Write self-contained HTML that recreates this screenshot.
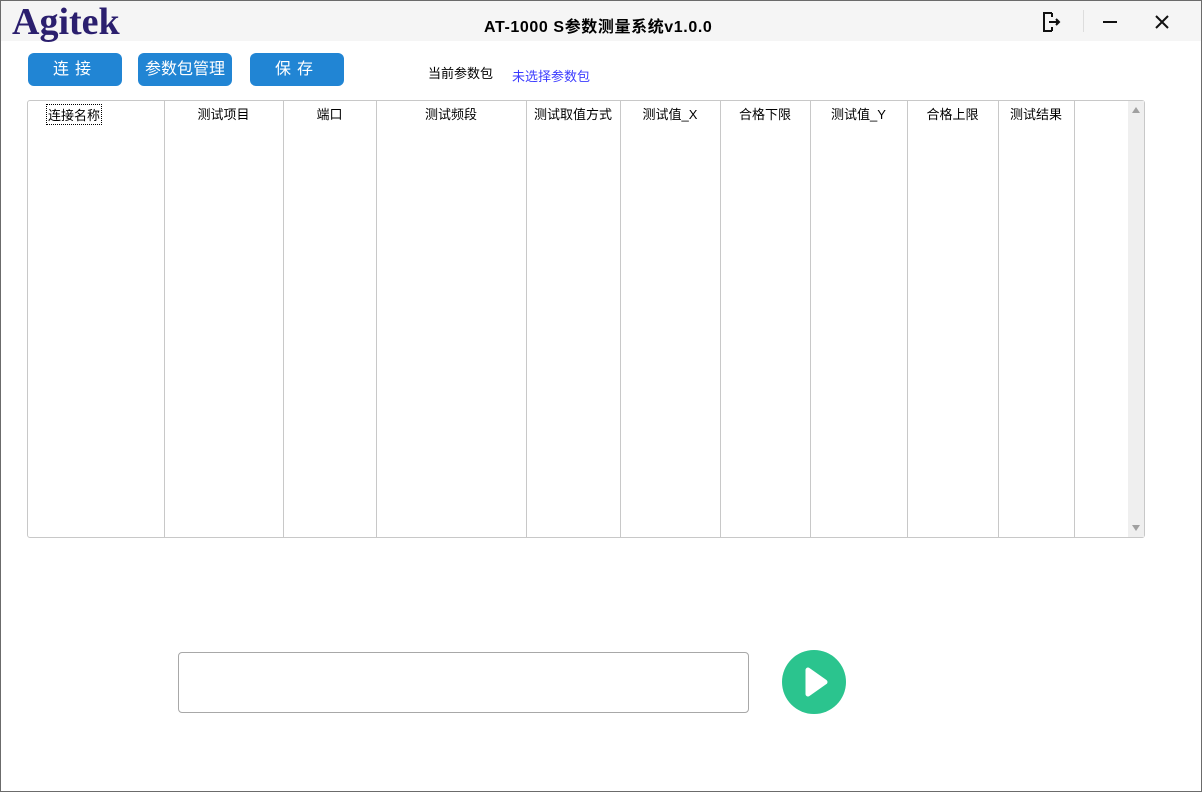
<!DOCTYPE html><html><head><meta charset="utf-8"><style>
body{margin:0;width:1202px;height:792px;overflow:hidden;background:#fff;font-family:"Liberation Sans","Noto Sans CJK SC",sans-serif;position:relative}
.win{position:absolute;left:0;top:0;width:1202px;height:792px;box-shadow:inset 0 0 0 1px #6b6b6b}
.tb{position:absolute;left:1px;top:1px;width:1200px;height:40px;background:#f5f5f5}
.logo{position:absolute;left:11px;top:-1px;font-family:"Liberation Serif",serif;font-size:38px;font-weight:bold;color:#2b1f6e}
.title{position:absolute;left:483px;top:12px;font-size:16px;font-weight:bold;color:#000;letter-spacing:0.6px}
.btn{position:absolute;top:53px;height:33px;background:#2185d4;border-radius:6px;color:#fff;font-size:16px;text-align:center;line-height:33px}
.t{position:absolute;font-size:13px}
.tbl{position:absolute;left:27px;top:100px;width:1116px;height:436px;border:1px solid #c8c8c8;border-radius:3px}
.col{position:absolute;top:0;height:436px;border-left:1px solid #c8c8c8}
.h{position:absolute;top:3px;font-size:13px;color:#000;text-align:center}
.sb{position:absolute;left:1100px;top:0;width:16px;height:436px;background:#efefef}
</style></head><body><div class="win">
<div class="tb"><div class="logo">Agitek</div>
<div class="title">AT-1000 S参数测量系统v1.0.0</div>
<svg style="position:absolute;left:1040px;top:10px" width="22" height="22" viewBox="0 0 22 22" fill="none" stroke="#111" stroke-width="2"><path d="M11 2H3v18h8M11 2v4M11 20v-4"/><path d="M8 11h10"/><path d="M15 8l3 3-3 3" fill="#111"/></svg>
<div style="position:absolute;left:1082px;top:9px;width:1px;height:22px;background:#ddd"></div>
<div style="position:absolute;left:1102px;top:20px;width:14px;height:2px;background:#111"></div>
<svg style="position:absolute;left:1154px;top:14px" width="14" height="14" viewBox="0 0 14 14" stroke="#111" stroke-width="2"><path d="M1 1l12 12M13 1L1 13"/></svg>
</div>
<div class="btn" style="left:28px;width:94px;letter-spacing:6px">连接</div>
<div class="btn" style="left:138px;width:94px">参数包管理</div>
<div class="btn" style="left:250px;width:94px;letter-spacing:6px">保存</div>
<div class="t" style="left:428px;top:63px">当前参数包</div>
<div class="t" style="left:512px;top:66px;color:#3b3bff">未选择参数包</div>
<div class="tbl">
<div class="h" style="left:18px;top:3px;border:1px dotted #000;padding:0 1px">连接名称</div>
<div class="col" style="left:136px"></div><div class="h" style="left:136px;width:119px">测试项目</div>
<div class="col" style="left:255px"></div><div class="h" style="left:255px;width:93px">端口</div>
<div class="col" style="left:348px"></div><div class="h" style="left:348px;width:150px">测试频段</div>
<div class="col" style="left:498px"></div><div class="h" style="left:498px;width:94px">测试取值方式</div>
<div class="col" style="left:592px"></div><div class="h" style="left:592px;width:100px">测试值_X</div>
<div class="col" style="left:692px"></div><div class="h" style="left:692px;width:90px">合格下限</div>
<div class="col" style="left:782px"></div><div class="h" style="left:782px;width:97px">测试值_Y</div>
<div class="col" style="left:879px"></div><div class="h" style="left:879px;width:91px">合格上限</div>
<div class="col" style="left:970px"></div><div class="h" style="left:970px;width:76px">测试结果</div>
<div class="col" style="left:1046px"></div>
<div class="sb"><div style="position:absolute;left:4px;top:6px;border:4px solid transparent;border-bottom:6px solid #a0a0a0;border-top:0"></div><div style="position:absolute;left:4px;top:424px;border:4px solid transparent;border-top:6px solid #a0a0a0;border-bottom:0"></div></div>
</div>
<div style="position:absolute;left:178px;top:652px;width:569px;height:59px;border:1px solid #a8a8a8;border-radius:4px"></div>
<div style="position:absolute;left:782px;top:650px;width:64px;height:64px;border-radius:50%;background:#2bc48e"></div>
<svg style="position:absolute;left:782px;top:650px" width="64" height="64"><path d="M26 20L43 32L26 44Z" fill="#fff" stroke="#fff" stroke-width="5" stroke-linejoin="round"/></svg>
</div></body></html>
